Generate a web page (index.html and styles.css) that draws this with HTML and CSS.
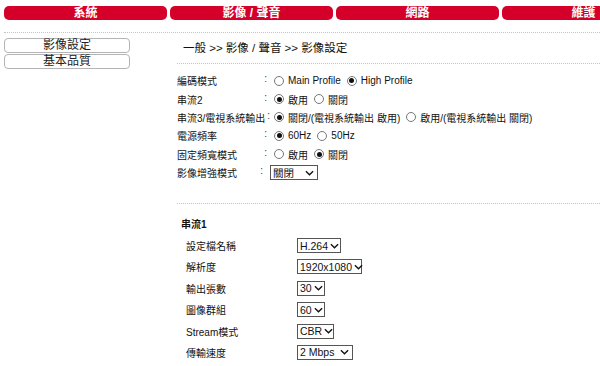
FILE: index.html
```html
<!DOCTYPE html>
<html lang="zh-TW">
<head>
    <meta charset="UTF-8">
    <title>影像設定</title>
    <link rel="stylesheet" href="styles.css">
</head>
<body>
    <nav class="topnav">
        <a class="tab">系統</a>
        <a class="tab">影像 / 聲音</a>
        <a class="tab">網路</a>
        <a class="tab">維護</a>
    </nav>

    <div class="page">
        <aside class="sidebar">
            <a class="side-btn">影像設定</a>
            <a class="side-btn">基本品質</a>
        </aside>

        <main class="content">
            <div class="crumb">一般 &gt;&gt; 影像 / 聲音 &gt;&gt; 影像設定</div>

            <div class="form-block">
                <div class="row">
                    <span class="label">編碼模式<b class="colon">:</b></span>
                    <span class="opt"><i class="radio"></i>Main Profile</span>
                    <span class="opt"><i class="radio on"></i>High Profile</span>
                </div>
                <div class="row">
                    <span class="label">串流2<b class="colon">:</b></span>
                    <span class="opt"><i class="radio on"></i>啟用</span>
                    <span class="opt"><i class="radio"></i>關閉</span>
                </div>
                <div class="row">
                    <span class="label long">串流3/電視系統輸出<b class="colon">:</b></span>
                    <span class="opt"><i class="radio on"></i>關閉/(電視系統輸出 啟用)</span>
                    <span class="opt"><i class="radio"></i>啟用/(電視系統輸出 關閉)</span>
                </div>
                <div class="row">
                    <span class="label">電源頻率<b class="colon">:</b></span>
                    <span class="opt"><i class="radio on"></i>60Hz</span>
                    <span class="opt"><i class="radio"></i>50Hz</span>
                </div>
                <div class="row">
                    <span class="label">固定頻寬模式<b class="colon">:</b></span>
                    <span class="opt"><i class="radio"></i>啟用</span>
                    <span class="opt"><i class="radio on"></i>關閉</span>
                </div>
                <div class="row">
                    <span class="label narrow">影像增強模式<b class="colon">:</b></span>
                    <span class="select w48">關閉<svg viewBox="0 0 10 6"><path d="M1 1 5 5 9 1" /></svg></span>
                </div>
            </div>

            <div class="stream">
                <div class="stream-title">串流1</div>
                <div class="srow">
                    <span class="slabel">設定檔名稱</span>
                    <span class="select w44">H.264<svg viewBox="0 0 10 6"><path d="M1 1 5 5 9 1" /></svg></span>
                </div>
                <div class="srow">
                    <span class="slabel">解析度</span>
                    <span class="select w65">1920x1080<svg viewBox="0 0 10 6"><path d="M1 1 5 5 9 1" /></svg></span>
                </div>
                <div class="srow">
                    <span class="slabel">輸出張數</span>
                    <span class="select w28">30<svg viewBox="0 0 10 6"><path d="M1 1 5 5 9 1" /></svg></span>
                </div>
                <div class="srow">
                    <span class="slabel">圖像群組</span>
                    <span class="select w28">60<svg viewBox="0 0 10 6"><path d="M1 1 5 5 9 1" /></svg></span>
                </div>
                <div class="srow">
                    <span class="slabel">Stream模式</span>
                    <span class="select w37">CBR<svg viewBox="0 0 10 6"><path d="M1 1 5 5 9 1" /></svg></span>
                </div>
                <div class="srow">
                    <span class="slabel">傳輸速度</span>
                    <span class="select w56">2 Mbps<svg viewBox="0 0 10 6"><path d="M1 1 5 5 9 1" /></svg></span>
                </div>
            </div>
        </main>
    </div>
</body>
</html>
```

FILE: styles.css
```css
* {
    margin: 0;
    padding: 0;
    box-sizing: border-box;
}

body {
    font-family: "Liberation Sans", "Noto Sans CJK TC", Arial, sans-serif;
    font-size: 10px;
    color: #111;
    background: #fff;
    overflow: hidden;
}

/* 頂部選單 */
.topnav {
    display: flex;
    gap: 3px;
    padding: 6px 0 0 4px;
    overflow: hidden;
}

.tab {
    flex: 0 0 163px;
    height: 14px;
    line-height: 14px;
    background: #d4002a;
    color: #fff;
    font-weight: bold;
    font-size: 12px;
    text-align: center;
    border-radius: 5px;
}

/* 主體 */
.page {
    display: flex;
    margin: 12px 0 0 4px;
    border-top: 1px dotted #c4c4c4;
    padding-top: 5px;
}

.sidebar {
    flex: 0 0 126px;
    display: flex;
    flex-direction: column;
    gap: 1px;
}

.side-btn {
    height: 15px;
    line-height: 13px;
    border: 1px solid #b4b4b4;
    border-radius: 4px;
    text-align: center;
    font-size: 12px;
    color: #222;
}

.content {
    flex: 1;
    margin-left: 47px;
}

.crumb {
    font-size: 11.5px;
    padding: 1px 0 0 6px;
    height: 26px;
    border-bottom: 1px dotted #c4c4c4;
}

.form-block {
    padding: 7.5px 0 21px 0;
    border-bottom: 1px dotted #c4c4c4;
}

.row {
    display: flex;
    align-items: center;
    height: 18.4px;
}

.label {
    display: flex;
    width: 97px;
    white-space: nowrap;
}

.colon {
    font-weight: normal;
    color: #444;
    margin: 0 7px 0 auto;
}

.label.long .colon {
    margin-left: 2px;
}

.label.narrow {
    width: 93px;
}

.opt {
    display: flex;
    align-items: center;
    margin-right: 6px;
    white-space: nowrap;
}

.radio {
    flex: 0 0 10px;
    height: 10px;
    border: 1px solid #777;
    border-radius: 50%;
    margin-right: 4px;
    display: flex;
    align-items: center;
    justify-content: center;
}

.radio.on::after {
    content: "";
    width: 5px;
    height: 5px;
    border-radius: 50%;
    background: #111;
}

.select {
    display: flex;
    align-items: center;
    justify-content: space-between;
    height: 15px;
    border: 1px solid #555;
    padding: 0 3px 0 2px;
    font-size: 10.5px;
    white-space: nowrap;
    background: #fff;
}

.select svg {
    flex: 0 0 9px;
    height: 6px;
    margin-left: 2px;
    fill: none;
    stroke: #111;
    stroke-width: 1.5;
}

.w28 { width: 28px; }
.w37 { width: 37px; }
.w44 { width: 44px; }
.w48 { width: 48px; }
.w56 { width: 56px; }
.w65 { width: 65px; }

/* 串流1 */
.stream {
    padding: 12px 0 0 4px;
}

.stream-title {
    font-weight: bold;
    height: 14px;
    margin-bottom: 5px;
}

.srow {
    display: flex;
    align-items: center;
    height: 21.4px;
    padding-left: 5px;
}

.slabel {
    width: 111px;
}
```
